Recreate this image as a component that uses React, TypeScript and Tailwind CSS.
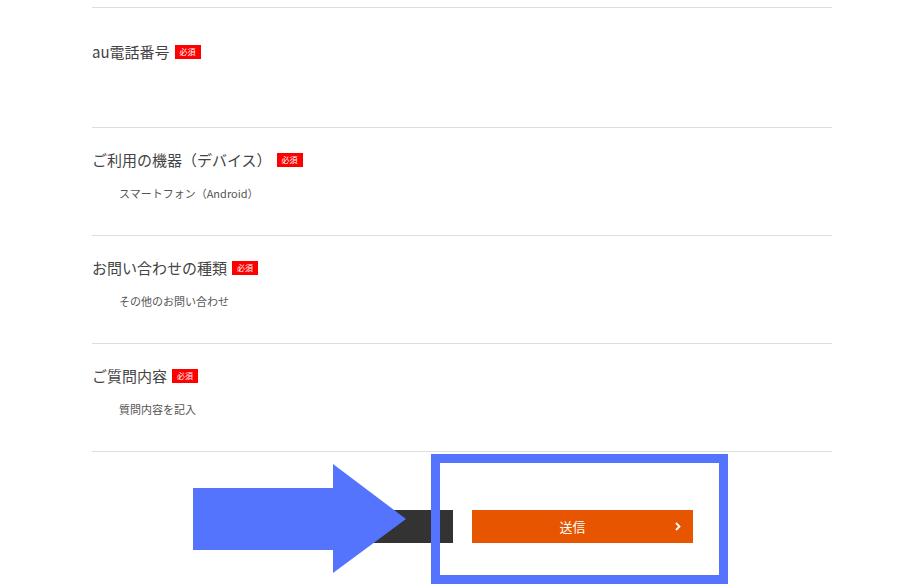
type Field = {
  label: string;
  value?: string;
};

const fields: Field[] = [
  { label: 'ご利用の機器（デバイス）', value: 'スマートフォン（Android）' },
  { label: 'お問い合わせの種類', value: 'その他のお問い合わせ' },
  { label: 'ご質問内容', value: '質問内容を記入' },
];

function Required() {
  return (
    <span className="ml-[5px] inline-flex h-[14px] w-[26px] items-center justify-center bg-[#ff0000] text-[8px] leading-none text-white">
      必須
    </span>
  );
}

function Label({ text }: { text: string }) {
  return (
    <div className="flex h-[20px] items-center">
      <span className="text-[15px] leading-[20px] text-[#444]">{text}</span>
      <Required />
    </div>
  );
}

export default function App() {
  return (
    <div className="relative h-[584px] w-[900px] overflow-hidden bg-white font-['Noto_Sans_CJK_JP','Noto_Sans',sans-serif]">
      <div className="ml-[92px] w-[740px] pt-[7px]">
        {/* phone number row */}
        <div className="border-t border-[#dedede] pt-[34px] pb-[65px]">
          <Label text="au電話番号" />
        </div>

        {fields.map((f) => (
          <div key={f.label} className="border-t border-[#dedede] pt-[22px] pb-[34px]">
            <Label text={f.label} />
            <p className="mt-[15px] pl-[27px] text-[11px] leading-[16px] text-[#555]">{f.value}</p>
          </div>
        ))}

        <div className="flex justify-center gap-[19px] border-t border-[#dedede] pt-[58px]">
          <button className="h-[33px] w-[221px] bg-[#333333] text-[13px] text-white">戻る</button>
          <button className="relative flex h-[33px] w-[221px] items-center justify-center bg-[#e85500] pr-[19px] text-[13px] text-white">
            送信
            <svg className="absolute right-[12px] top-[12px]" width="6" height="9" viewBox="0 0 6 9">
              <path d="M1 1 L4.5 4.5 L1 8" fill="none" stroke="white" strokeWidth="1.8" />
            </svg>
          </button>
        </div>
      </div>

      {/* callout arrow */}
      <svg className="absolute left-[193px] top-[464px]" width="213" height="109" viewBox="0 0 213 109">
        <polygon points="0,24 140,24 140,0 213,55 140,109 140,86 0,86" fill="#5474fe" />
      </svg>

      {/* highlight frame */}
      <div className="absolute left-[431px] top-[454px] h-[130px] w-[297px] border-[9px] border-[#5474fe]" />
    </div>
  );
}
